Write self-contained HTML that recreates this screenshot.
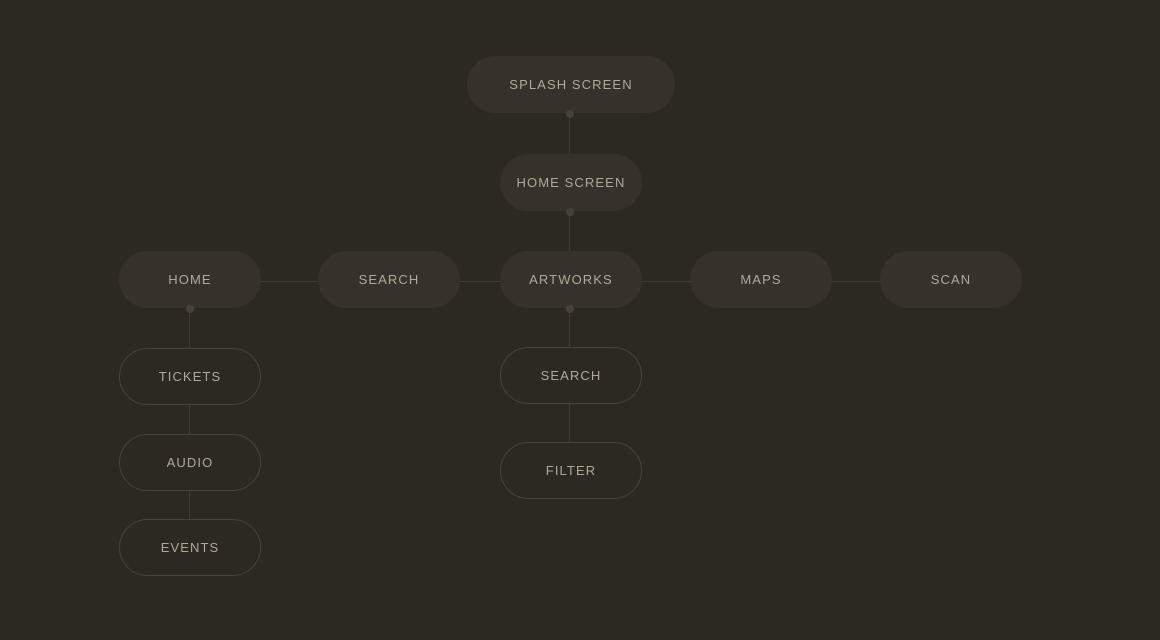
<!DOCTYPE html><html><head><style>
body{margin:0;width:1160px;height:640px;background:#2c2922;position:relative;overflow:hidden;font-family:"Liberation Sans",sans-serif}
.p{position:absolute;box-sizing:border-box;border-radius:29px;display:flex;align-items:center;justify-content:center;color:#b0a899;font-size:13px;letter-spacing:1.1px}
.f{background:#36322b}
.o{border:1px solid #47433b}
.l{position:absolute;background:#403c35}
.d{position:absolute;width:8px;height:8px;border-radius:50%;background:#46423a}
</style></head><body>
<div class="l" style="left:569px;top:113px;width:1px;height:155px"></div>
<div class="l" style="left:569px;top:300px;width:1px;height:160px"></div>
<div class="l" style="left:240px;top:281px;width:720px;height:1px"></div>
<div class="l" style="left:189px;top:300px;width:1px;height:240px"></div>
<div class="p f" style="left:467px;top:56px;width:208px;height:57px">SPLASH SCREEN</div>
<div class="p f" style="left:500px;top:154px;width:142px;height:57px">HOME SCREEN</div>
<div class="p f" style="left:119px;top:251px;width:142px;height:57px">HOME</div>
<div class="p f" style="left:318px;top:251px;width:142px;height:57px">SEARCH</div>
<div class="p f" style="left:500px;top:251px;width:142px;height:57px">ARTWORKS</div>
<div class="p f" style="left:690px;top:251px;width:142px;height:57px">MAPS</div>
<div class="p f" style="left:880px;top:251px;width:142px;height:57px">SCAN</div>
<div class="p o" style="left:119px;top:348px;width:142px;height:57px;background:#2c2922">TICKETS</div>
<div class="p o" style="left:119px;top:434px;width:142px;height:57px;background:#2c2922">AUDIO</div>
<div class="p o" style="left:119px;top:519px;width:142px;height:57px;background:#2c2922">EVENTS</div>
<div class="p o" style="left:500px;top:347px;width:142px;height:57px;background:#2c2922">SEARCH</div>
<div class="p o" style="left:500px;top:442px;width:142px;height:57px;background:#2c2922">FILTER</div>
<div class="d" style="left:566px;top:110px"></div>
<div class="d" style="left:566px;top:208px"></div>
<div class="d" style="left:186px;top:305px"></div>
<div class="d" style="left:566px;top:305px"></div>
</body></html>
